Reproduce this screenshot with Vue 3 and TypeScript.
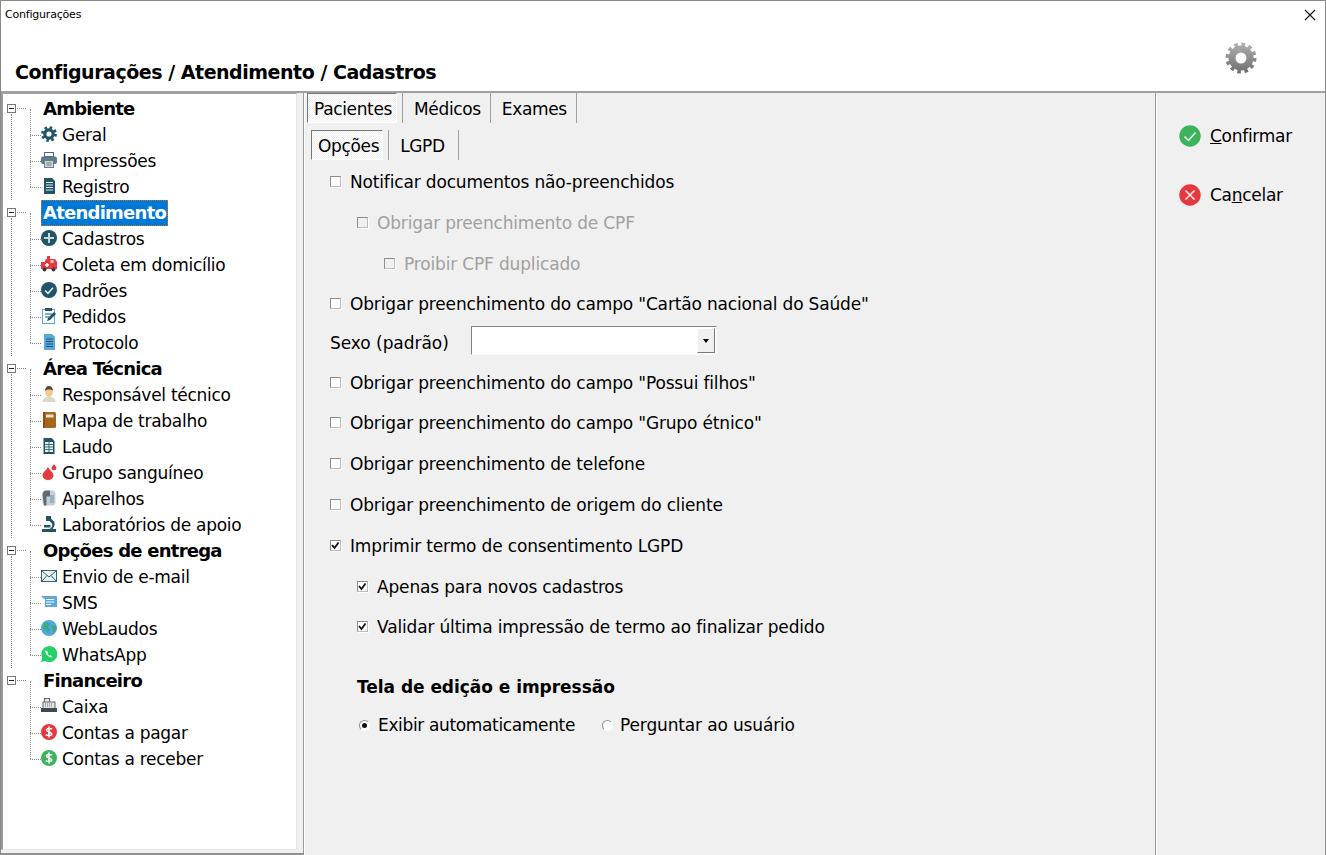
<script setup lang="ts">
interface Item { label: string; icon: string }
interface Group { title: string; selected?: boolean; items: Item[] }

const groups: Group[] = [
  { title: 'Ambiente', items: [
    { label: 'Geral', icon: 'gear' }, { label: 'Impressões', icon: 'printer' }, { label: 'Registro', icon: 'doc' } ] },
  { title: 'Atendimento', selected: true, items: [
    { label: 'Cadastros', icon: 'plus' }, { label: 'Coleta em domicílio', icon: 'ambulance' }, { label: 'Padrões', icon: 'check' },
    { label: 'Pedidos', icon: 'clipboard' }, { label: 'Protocolo', icon: 'bluedoc' } ] },
  { title: 'Área Técnica', items: [
    { label: 'Responsável técnico', icon: 'person' }, { label: 'Mapa de trabalho', icon: 'book' }, { label: 'Laudo', icon: 'report' },
    { label: 'Grupo sanguíneo', icon: 'blood' }, { label: 'Aparelhos', icon: 'device' }, { label: 'Laboratórios de apoio', icon: 'scope' } ] },
  { title: 'Opções de entrega', items: [
    { label: 'Envio de e-mail', icon: 'mail' }, { label: 'SMS', icon: 'sms' }, { label: 'WebLaudos', icon: 'globe' }, { label: 'WhatsApp', icon: 'whats' } ] },
  { title: 'Financeiro', items: [
    { label: 'Caixa', icon: 'cash' }, { label: 'Contas a pagar', icon: 'pay' }, { label: 'Contas a receber', icon: 'receive' } ] },
]

interface Opt { label: string; level: 0 | 1 | 2; checked?: boolean; disabled?: boolean; h: number }
const before: Opt[] = [
  { label: 'Notificar documentos não-preenchidos', level: 0, h: 41 },
  { label: 'Obrigar preenchimento de CPF', level: 1, disabled: true, h: 41 },
  { label: 'Proibir CPF duplicado', level: 2, disabled: true, h: 40 },
  { label: 'Obrigar preenchimento do campo "Cartão nacional do Saúde"', level: 0, h: 39 },
]
const after: Opt[] = [
  { label: 'Obrigar preenchimento do campo "Possui filhos"', level: 0, h: 40 },
  { label: 'Obrigar preenchimento do campo "Grupo étnico"', level: 0, h: 41 },
  { label: 'Obrigar preenchimento de telefone', level: 0, h: 41 },
  { label: 'Obrigar preenchimento de origem do cliente', level: 0, h: 41 },
  { label: 'Imprimir termo de consentimento LGPD', level: 0, checked: true, h: 41 },
  { label: 'Apenas para novos cadastros', level: 1, checked: true, h: 40 },
  { label: 'Validar última impressão de termo ao finalizar pedido', level: 1, checked: true, h: 60 },
]
</script>

<template>
  <div class="window">
    <header class="head">
      <div class="titlebar">
        <span class="wintitle">Configurações</span>
        <svg class="close" width="12" height="12" viewBox="0 0 12 12"><path d="M1 1l10 10M11 1L1 11" stroke="#111" stroke-width="1.1" fill="none"/></svg>
      </div>
      <div class="crumbrow">
        <h1 class="crumb">Configurações / Atendimento / Cadastros</h1>
        <svg class="biggear" width="34" height="34" viewBox="0 0 34 34">
          <defs><linearGradient id="gg" gradientUnits="userSpaceOnUse" x1="0" y1="0" x2="0" y2="34"><stop offset="0" stop-color="#b4b4b4"/><stop offset="1" stop-color="#6a6a6a"/></linearGradient></defs>
          <circle cx="17" cy="17" r="13.5" fill="none" stroke="url(#gg)" stroke-width="4" stroke-dasharray="3.5 3.57"/>
          <circle cx="17" cy="17" r="9" fill="none" stroke="url(#gg)" stroke-width="7"/>
        </svg>
      </div>
    </header>

    <div class="body">
      <div class="leftpane">
        <nav class="tree">
          <section v-for="(g, gi) in groups" :key="g.title" class="group">
            <div class="grouprow">
              <span class="expander"></span>
              <span class="stub"></span>
              <span class="grouptitle" :class="{ selected: g.selected }">{{ g.title }}</span>
            </div>
            <div class="rootline" :class="{ last: gi === groups.length - 1 }">
              <ul class="children">
                <li v-for="it in g.items" :key="it.label" class="item">
                  <span class="conn"></span>
                  <svg class="ico" width="16" height="16" viewBox="0 0 16 16">
                    <template v-if="it.icon === 'gear'">
                      <circle cx="8" cy="8" r="6.4" fill="none" stroke="#1f5566" stroke-width="3" stroke-dasharray="2.5 2.5"/>
                      <circle cx="8" cy="8" r="4.2" fill="none" stroke="#1f5566" stroke-width="3.2"/>
                    </template>
                    <template v-else-if="it.icon === 'printer'">
                      <rect x="3.500" y="0.500" width="9" height="4" fill="#fff" stroke="#4a6a78"/>
                      <rect x="0" y="4.500" width="16" height="7.500" rx="2" fill="#5b7c8a"/>
                      <rect x="3.500" y="8.500" width="9" height="7" fill="#ccd3d6" stroke="#6b7f88"/>
                      <path d="M5.500 11h5M5.500 13h5" stroke="#6b7f88"/>
                    </template>
                    <template v-else-if="it.icon === 'doc'">
                      <path d="M3 0h8l3 3v13H3z" fill="#1f5566"/>
                      <path d="M5 4.500h7M5 7h7M5 9.500h7M5 12h7" stroke="#dfe8ea"/>
                    </template>
                    <template v-else-if="it.icon === 'plus'">
                      <circle cx="8" cy="8" r="8" fill="#1f5566"/>
                      <path d="M8 3v10M3 8h10" stroke="#c9d8dc" stroke-width="2"/>
                    </template>
                    <template v-else-if="it.icon === 'ambulance'">
                      <path d="M0 6h3.500l1.500-3h1V0h3v3h5l2 3v7H0z" fill="#e5393f"/>
                      <rect x="9.500" y="4" width="3" height="3" fill="#f6c9cb"/>
                      <path d="M4 9h4M6 7v4" stroke="#fff" stroke-width="1.500"/>
                      <circle cx="3.500" cy="13.500" r="2" fill="#3a3a3a"/><circle cx="12.500" cy="13.500" r="2" fill="#3a3a3a"/>
                    </template>
                    <template v-else-if="it.icon === 'check'">
                      <circle cx="8" cy="8" r="8" fill="#1f5566"/>
                      <path d="M4 8.500l3 2.800 5-5.600" stroke="#e4edef" stroke-width="1.600" fill="none"/>
                    </template>
                    <template v-else-if="it.icon === 'clipboard'">
                      <rect x="1.500" y="1.500" width="12" height="14" fill="#fff" stroke="#5aa9dc"/>
                      <rect x="4" y="0" width="7" height="3" fill="#1f5566"/>
                      <path d="M4 6h7M4 9h4" stroke="#1f5566"/>
                      <path d="M6 13l1-3 6-6 2 2-6 6z" fill="#1f5566"/>
                    </template>
                    <template v-else-if="it.icon === 'bluedoc'">
                      <path d="M3 0h8l3 3v13H3z" fill="#5aa9dc"/>
                      <path d="M5 5h7M5 7.500h7M5 10h7M5 12.500h7" stroke="#1f5566"/>
                    </template>
                    <template v-else-if="it.icon === 'person'">
                      <path d="M1.500 16c0-4 3-5 6.500-5s6.500 1 6.500 5z" fill="#d9d9d0"/>
                      <ellipse cx="8" cy="6" rx="3.800" ry="5" fill="#f5c58a"/>
                      <path d="M4 5c0-3 1.500-5 4-5s4 2 4 5c-1-2-7-2-8 0z" fill="#4a4a40"/>
                    </template>
                    <template v-else-if="it.icon === 'book'">
                      <rect x="2" y="0" width="13" height="16" rx="1.500" fill="#a8661c"/>
                      <rect x="5" y="2.500" width="7.500" height="3" rx=".5" fill="#f3e3cf"/>
                      <rect x="2" y="0" width="2" height="16" fill="#8c5212"/>
                    </template>
                    <template v-else-if="it.icon === 'report'">
                      <path d="M2.500 0h8l3 3v13h-11z" fill="#1f5566"/>
                      <rect x="4" y="4" width="8" height="10" fill="#e6edef"/>
                      <path d="M4 6.500h8M4 9h8M4 11.500h8M8 4v10" stroke="#1f5566" stroke-width=".8"/>
                    </template>
                    <template v-else-if="it.icon === 'blood'">
                      <path d="M7 3c1.500 3 5.500 5.500 5.500 8.500a5.500 4.500 0 0 1-11 0c0-3 4-5.500 5.500-8.500z" fill="#e5393f"/>
                      <path d="M13 0c.5 1.500 2.500 2.500 2.500 4a2.500 2.300 0 0 1-5 0c0-1.500 2-2.500 2.500-4z" fill="#e5393f"/>
                    </template>
                    <template v-else-if="it.icon === 'device'">
                      <rect x="1.500" y="0.500" width="13" height="15" rx="3" fill="#c9ced1"/>
                      <path d="M1.500 5c0-3 2-4.500 4-4.500h3.500v6H5.500v9H3z" fill="#5d6b72"/>
                      <rect x="9" y="5" width="4" height="8" fill="#8fb4c4"/>
                    </template>
                    <template v-else-if="it.icon === 'scope'">
                      <path d="M1 13h14v3H1z" fill="#1f5566"/>
                      <path d="M5 0h5v2.500l3 3c1.500 2.500 0 6-1.500 7.500H8.500c2-1 3.500-3.500 2.500-5.500L8.500 5H5z" fill="#1f5566"/>
                      <rect x="3" y="9" width="6.500" height="2.500" fill="#1f5566"/>
                    </template>
                    <template v-else-if="it.icon === 'mail'">
                      <rect x="0.500" y="2.500" width="15" height="11" fill="#e9f0f2" stroke="#2f6576"/>
                      <path d="M1 3l7 6 7-6M1 13l5-5.500M15 13l-5-5.500" stroke="#2f6576" fill="none"/>
                    </template>
                    <template v-else-if="it.icon === 'sms'">
                      <path d="M2 2h14v11H4V6z" fill="#5aa9dc"/>
                      <path d="M0 2h3v3z" fill="#5aa9dc"/>
                      <path d="M5 5.500h8M5 8h8M5 10.500h5" stroke="#fff"/>
                    </template>
                    <template v-else-if="it.icon === 'globe'">
                      <circle cx="8" cy="8" r="8" fill="#52a8e4"/>
                      <path d="M3 3l4-1 2 2-2 3 2 3-2 3-2-3-3-1zM11 5l4 1 .5 4-3 3-1-3z" fill="#3dac76"/>
                    </template>
                    <template v-else-if="it.icon === 'whats'">
                      <path d="M0 16l1.200-4.300A8 8 0 1 1 4.300 15z" fill="#22d266"/>
                      <path d="M5 4c-1.500 1-.8 3 1 5s4 3 5.200 1.700L9.500 9l-1 .7C7.500 9 7 8.300 6.500 7.400l.7-1z" fill="#fff"/>
                    </template>
                    <template v-else-if="it.icon === 'cash'">
                      <rect x="3.500" y="0.500" width="5" height="4" fill="#e8e8e8" stroke="#666"/>
                      <rect x="2" y="4" width="12" height="6.500" fill="#dfe3e5" stroke="#666"/>
                      <path d="M4 6h8M4 8h8" stroke="#777" stroke-dasharray="1 1"/>
                      <rect x="0" y="10" width="16" height="4" fill="#3f4a50"/>
                    </template>
                    <template v-else-if="it.icon === 'pay' || it.icon === 'receive'">
                      <circle cx="8" cy="8" r="8" :fill="it.icon === 'pay' ? '#e5393f' : '#3cb45c'"/>
                      <path d="M11 5.300C10 4.200 5.500 4 5.500 6c0 2.300 5.300 1.600 5.300 4 0 2-4.800 1.800-6 .6M8 2.500v11" stroke="#fff" stroke-width="1.500" fill="none"/>
                    </template>
                  </svg>
                  <span class="itemlabel">{{ it.label }}</span>
                </li>
              </ul>
            </div>
          </section>
        </nav>
        <div class="splitter"></div>
      </div>

      <main class="main">
        <div class="tabs">
          <span class="tab active">Pacientes</span>
          <span class="tab">Médicos</span>
          <span class="tab">Exames</span>
        </div>
        <div class="tabs sub">
          <span class="tab active">Opções</span>
          <span class="tab">LGPD</span>
        </div>
        <div class="form">
          <label v-for="o in before" :key="o.label" class="opt" :class="['lvl' + o.level, { disabled: o.disabled }]" :style="{ height: o.h + 'px' }">
            <span class="cb"></span><span>{{ o.label }}</span>
          </label>
          <div class="selectrow">
            <span class="sexo">Sexo (padrão)</span>
            <span class="select"><span class="arrowbtn"><span class="arrow"></span></span></span>
          </div>
          <label v-for="o in after" :key="o.label" class="opt" :class="['lvl' + o.level]" :style="{ height: o.h + 'px' }">
            <span class="cb">
              <svg v-if="o.checked" width="9" height="9" viewBox="0 0 9 9"><path d="M1 4l2.500 3 4-5.500" stroke="#111" stroke-width="1.800" fill="none"/></svg>
            </span><span>{{ o.label }}</span>
          </label>
          <h2 class="subhead">Tela de edição e impressão</h2>
          <div class="radios">
            <span class="radio on"></span><span class="rlabel first">Exibir automaticamente</span>
            <span class="radio second"></span><span class="rlabel last">Perguntar ao usuário</span>
          </div>
        </div>
      </main>

      <aside class="side">
        <div class="action">
          <svg width="22" height="22" viewBox="0 0 22 22"><circle cx="11" cy="11" r="10.700" fill="#3cb45c"/><path d="M5.500 11.500l4 4 7-8" stroke="#eaf7ee" stroke-width="1.500" fill="none"/></svg>
          <span><u>C</u>onfirmar</span>
        </div>
        <div class="action">
          <svg width="22" height="22" viewBox="0 0 22 22"><circle cx="11" cy="11" r="10.700" fill="#e5393f"/><path d="M6.500 6.500l9 9M15.500 6.500l-9 9" stroke="#fdeced" stroke-width="1.500" fill="none"/></svg>
          <span>Ca<u>n</u>celar</span>
        </div>
      </aside>
    </div>
  </div>
</template>

<style>
html, body { margin: 0; padding: 0; background: #fff; overflow: hidden; }
</style>

<style scoped>
.window {
  width: 1326px; height: 855px; box-sizing: border-box;
  border: 1px solid #8a8a8a; border-bottom: 0;
  display: flex; flex-direction: column;
  font-family: "DejaVu Sans", "Noto Sans", sans-serif;
  font-size: 17px; letter-spacing: -0.28px; color: #000; background: #fff;
}
.head { height: 90px; flex: none; border-bottom: 2px solid #a0a0a0; display: flex; flex-direction: column; }
.titlebar { height: 29px; display: flex; align-items: center; justify-content: space-between; padding: 0 9px 2px 4px; box-sizing: border-box; }
.wintitle { font-size: 11px; letter-spacing: -0.2px; }
.crumbrow { flex: 1; display: flex; align-items: flex-end; justify-content: space-between; padding: 0 67px 7px 14px; }
.crumb { margin: 0; font-size: 19px; font-weight: 700; letter-spacing: -0.47px; line-height: 24px; }
.biggear { margin-bottom: 9px; }
.body { flex: 1; min-height: 0; display: flex; background: #f0f0f0; }
.leftpane { display: flex; flex: none; border-bottom: 2px solid #909090; }
.tree {
  width: 293px; flex: none; background: #fff; padding: 2px 0 0; margin-bottom: 3px;
  border-left: 2px solid #9a9a9a; border-top: 1px solid #a0a0a0; border-right: 1px solid #e3e3e3; border-bottom: 1px solid #e3e3e3;
}
.grouprow { height: 26px; display: flex; align-items: center; padding-left: 4px; }
.expander {
  width: 9px; height: 9px; margin-bottom: 2px; flex: none; border: 1px solid #777; box-sizing: border-box; background: #fff;
  background-image: linear-gradient(#222, #222); background-size: 5px 1px; background-repeat: no-repeat; background-position: center;
}
.stub { width: 9px; margin: 0 1px 2px; border-top: 1px dotted #888; flex: none; }
.grouptitle { margin-left: 14px; padding: 0 1px; font-weight: 700; font-size: 18px; letter-spacing: -0.75px; line-height: 24px; border: 1px dotted transparent; white-space: nowrap; }
.grouptitle.selected { background: #0078d7; color: #fff; border-color: #c9741a; }
.rootline { margin-left: 8px; border-left: 1px dotted #888; margin-top: -8px; padding-top: 8px; }
.rootline.last { border-left-color: transparent; }
.children { list-style: none; margin: -4px 0 0 18px; padding: 0; }
.item { height: 26px; display: flex; align-items: center; position: relative; }
.item:first-child { margin-top: 4px; }
.item::before { content: ""; position: absolute; left: 0; top: -13px; height: 26px; border-left: 1px dotted #888; }
.conn { width: 11px; border-top: 1px dotted #888; flex: none; }
.ico { flex: none; margin-bottom: 2px; }
.itemlabel { margin-left: 5px; padding-bottom: 1px; white-space: nowrap; }
.splitter { width: 6px; flex: none; border-right: 1px solid #9a9a9a; }
.main { flex: 1; min-width: 0; border-left: 1px solid #fff; padding-left: 2px; }
.tabs { display: flex; height: 37px; align-items: flex-start; letter-spacing: -0.35px; }
.tab { height: 29px; line-height: 30px; padding: 1px 9px 0 11px; border-right: 1px solid #a0a0a0; white-space: nowrap; }
.tab.active {
  padding: 0 4px 0 6px; margin-right: 5px; border: 1px solid; border-color: #777 #fff #fff #777; height: 28px;
  background: repeating-conic-gradient(#fff 0 25%, #f0f0f0 0 50%) 0 0 / 2px 2px;
}
.tab.active + .tab { border-left: 1px solid #a0a0a0; }
.tabs.sub { padding-left: 4px; height: 30px; }
.tabs.sub .tab.active { padding-right: 3px; }
.tabs.sub .tab:last-child { padding-right: 13px; }
.form { padding: 10px 0 0 23px; letter-spacing: -0.16px; }
.opt { display: flex; align-items: flex-start; line-height: 24px; gap: 8px; white-space: nowrap; }
.lvl1 { padding-left: 27px; }
.lvl2 { padding-left: 54px; gap: 8px; }
.disabled { color: #a0a0a0; }
.cb {
  width: 11px; height: 11px; margin: 6px 1px 0 0; flex: none; box-sizing: border-box;
  border: 1px solid; border-color: #8c8c8c #bdbdbd #bdbdbd #8c8c8c; box-shadow: 1px 1px 0 #fff;
  background: #fff; display: flex; align-items: center; justify-content: center;
}
.disabled .cb { background: #f0f0f0; }
.selectrow { height: 40px; display: flex; align-items: flex-start; line-height: 24px; }
.sexo { width: 141px; letter-spacing: -0.05px; }
.select {
  width: 246px; height: 29px; margin-top: -5px; box-sizing: border-box; background: #fff; border: 1px solid; border-color: #808080 #f8f8f8 #f8f8f8 #808080;
  display: flex; justify-content: flex-end; padding: 1px;
}
.arrowbtn { width: 16px; background: #f0f0f0; border: 1px solid; border-color: #fff #777 #777 #fff; display: flex; align-items: center; justify-content: center; }
.arrow { width: 0; height: 0; border: 3px solid transparent; border-top: 4px solid #000; border-bottom: 0; }
.subhead { margin: 0; padding-left: 27px; height: 38px; font-size: 17px; font-weight: 700; letter-spacing: -0.04px; line-height: 24px; }
.radios { display: flex; align-items: center; height: 24px; padding-left: 29px; white-space: nowrap; }
.radio {
  width: 11px; height: 11px; border-radius: 50%; box-sizing: border-box; border: 1px solid; border-color: #909090 #fff #fff #909090;
  background: #fff; flex: none; display: inline-flex; align-items: center; justify-content: center;
}
.radio.on::after { content: ""; width: 5px; height: 5px; border-radius: 50%; background: #111; }
.radio.second { margin-left: 27px; }
.rlabel { margin-left: 8px; }
.rlabel.first { letter-spacing: -0.35px; }
.rlabel.last { letter-spacing: -0.15px; margin-left: 7px; }
.side {
  width: 170px; flex: none; border-left: 1px solid #9a9a9a; box-shadow: inset 1px 0 0 #fff; padding: 32px 0 0 23px; box-sizing: border-box;
  display: flex; flex-direction: column; gap: 37px;
}
.action { display: flex; align-items: center; gap: 9px; height: 22px; }
</style>
